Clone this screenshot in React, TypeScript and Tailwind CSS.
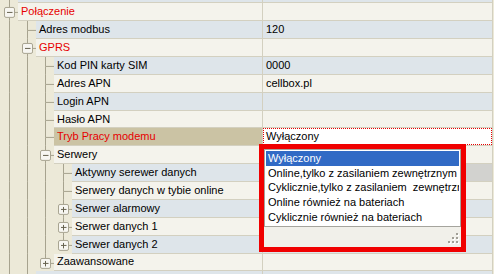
type Kind = 'leaf' | 'open' | 'closed'

interface Row {
  level: number
  label: string
  kind: Kind
  red?: boolean
  value?: string
  /** vertical lines of the ancestor levels that pass the whole row */
  bars: boolean[]
  /** line of the row's own level continues to the row below */
  down: boolean
  focused?: boolean
  grayValue?: boolean
}

const rows: Row[] = [
  { level: 0, label: '', kind: 'leaf', bars: [], down: true },
  { level: 0, label: 'Połączenie', kind: 'open', red: true, bars: [], down: true },
  { level: 1, label: 'Adres modbus', kind: 'leaf', value: '120', bars: [true], down: true },
  { level: 1, label: 'GPRS', kind: 'open', red: true, bars: [true], down: true },
  { level: 2, label: 'Kod PIN karty SIM', kind: 'leaf', value: '0000', bars: [true, true], down: true },
  { level: 2, label: 'Adres APN', kind: 'leaf', value: 'cellbox.pl', bars: [true, true], down: true },
  { level: 2, label: 'Login APN', kind: 'leaf', bars: [true, true], down: true },
  { level: 2, label: 'Hasło APN', kind: 'leaf', bars: [true, true], down: true },
  {
    level: 2,
    label: 'Tryb Pracy modemu',
    kind: 'leaf',
    red: true,
    value: 'Wyłączony',
    bars: [true, true],
    down: true,
    focused: true,
  },
  { level: 2, label: 'Serwery', kind: 'open', bars: [true, true], down: true },
  { level: 3, label: 'Aktywny serewer danych', kind: 'leaf', bars: [true, true, true], down: true, grayValue: true },
  { level: 3, label: 'Serwery danych w tybie online', kind: 'leaf', bars: [true, true, true], down: true },
  { level: 3, label: 'Serwer alarmowy', kind: 'closed', bars: [true, true, true], down: true },
  { level: 3, label: 'Serwer danych 1', kind: 'closed', bars: [true, true, true], down: true },
  { level: 3, label: 'Serwer danych 2', kind: 'closed', bars: [true, true, true], down: false },
  { level: 2, label: 'Zaawansowane', kind: 'closed', bars: [true, true], down: false },
  { level: 1, label: '', kind: 'leaf', bars: [true], down: true },
]

const options = [
  'Wyłączony',
  'Online,tylko z zasilaniem zewnętrznym',
  'Cyklicznie,tylko z zasilaniem  zewnętrznym',
  'Online również na bateriach',
  'Cyklicznie również na bateriach',
]

const LINE = '#a7a38f'

function TreeGutter({ row }: { row: Row }) {
  const w = 18 * (row.level + 1)
  const cx = 18 * row.level + 9.5
  const boxed = row.kind !== 'leaf'

  return (
    <svg
      width={w}
      height="100%"
      viewBox={`0 0 ${w} 18`}
      preserveAspectRatio="none"
      className="shrink-0"
      shapeRendering="crispEdges"
    >
      {row.bars.map((on, i) =>
        on ? <line key={i} x1={18 * i + 9.5} y1={0} x2={18 * i + 9.5} y2={18} stroke={LINE} /> : null,
      )}
      {/* own level: up to the node, on to the next sibling */}
      <line x1={cx} y1={0} x2={cx} y2={boxed ? 4 : 9.5} stroke={LINE} />
      {row.down && <line x1={cx} y1={boxed ? 15 : 9.5} x2={cx} y2={18} stroke={LINE} />}
      <line x1={boxed ? cx + 5 : cx} y1={9.5} x2={w} y2={9.5} stroke={LINE} />
      {boxed && (
        <g>
          <rect
            x={cx - 5}
            y={4.5}
            width={10}
            height={10}
            rx={1.5}
            fill="#f7f6f1"
            stroke="#a8a491"
            shapeRendering="auto"
          />
          <line x1={cx - 2.5} y1={9.5} x2={cx + 3} y2={9.5} stroke="#66624f" />
          {row.kind === 'closed' && <line x1={cx} y1={7} x2={cx} y2={12.5} stroke="#66624f" />}
        </g>
      )}
    </svg>
  )
}

function GridRow({ row, index }: { row: Row; index: number }) {
  const stripe = index % 2 === 0 ? 'bg-[#dee5ea]' : 'bg-[#f4f3ec]'
  const nameBg = row.focused ? 'bg-[#cbc3a4]' : stripe
  const valueBg = row.focused ? 'bg-white' : row.grayValue ? 'bg-[#d2d2cf]' : stripe

  return (
    <div className="flex h-[17.86px] shrink-0">
      <TreeGutter row={row} />
      <div className="flex flex-1 border-b border-[#d3d0c0]">
        <div
          className={`flex flex-1 items-center border-r border-[#d3d0c0] pl-[3px] whitespace-nowrap ${nameBg} ${
            row.red ? 'text-[#e60000]' : 'text-black'
          }`}
        >
          {row.label}
        </div>
        <div className={`flex w-[230px] items-center border-r border-[#d3d0c0] ${valueBg}`}>
          {row.focused ? (
            <div className="flex h-full w-full items-center border border-dotted border-[#e60000] pl-[2px]">
              {row.value}
            </div>
          ) : (
            <span className="pl-[3px]">{row.value}</span>
          )}
        </div>
      </div>
    </div>
  )
}

function ResizeGrip() {
  const dots = [
    [8, 0],
    [4, 4],
    [8, 4],
    [0, 8],
    [4, 8],
    [8, 8],
  ]
  return (
    <svg width="11" height="11" viewBox="0 0 11 11" shapeRendering="crispEdges">
      {dots.map(([x, y], i) => (
        <g key={i}>
          <rect x={x + 1} y={y + 1} width={2} height={2} fill="#ffffff" />
          <rect x={x} y={y} width={2} height={2} fill="#a19f96" />
        </g>
      ))}
    </svg>
  )
}

export default function App() {
  return (
    <div
      className="relative h-[274px] w-[494px] overflow-hidden bg-[#ece9d8] text-[11px] leading-none text-black"
      style={{ fontFamily: '"Liberation Sans", Arial, sans-serif' }}
    >
      <div className="mt-[-14.4px] flex w-[493px] flex-col">
        {rows.map((row, i) => (
          <GridRow key={i} row={row} index={i} />
        ))}
      </div>

      {/* open dropdown, framed in red */}
      <div className="absolute left-[259px] top-[144px] flex h-[108px] w-[207px] border-[5px] border-[#f00000]">
        <div className="flex min-w-0 flex-1 flex-col overflow-hidden bg-[#f1f0ea]">
          <div className="h-[78px] overflow-hidden border border-[#a5a49d] bg-white p-px">
            {options.map((opt, i) => (
              <div
                key={opt}
                className={`flex h-[14.75px] items-center overflow-hidden whitespace-pre pl-[2px] ${
                  i === 0 ? 'bg-[#316ac5] text-white' : 'text-black'
                }`}
              >
                {opt}
              </div>
            ))}
          </div>
          <div className="flex flex-1 items-end justify-end pb-[3px] pr-[2px]">
            <ResizeGrip />
          </div>
        </div>
      </div>
    </div>
  )
}
